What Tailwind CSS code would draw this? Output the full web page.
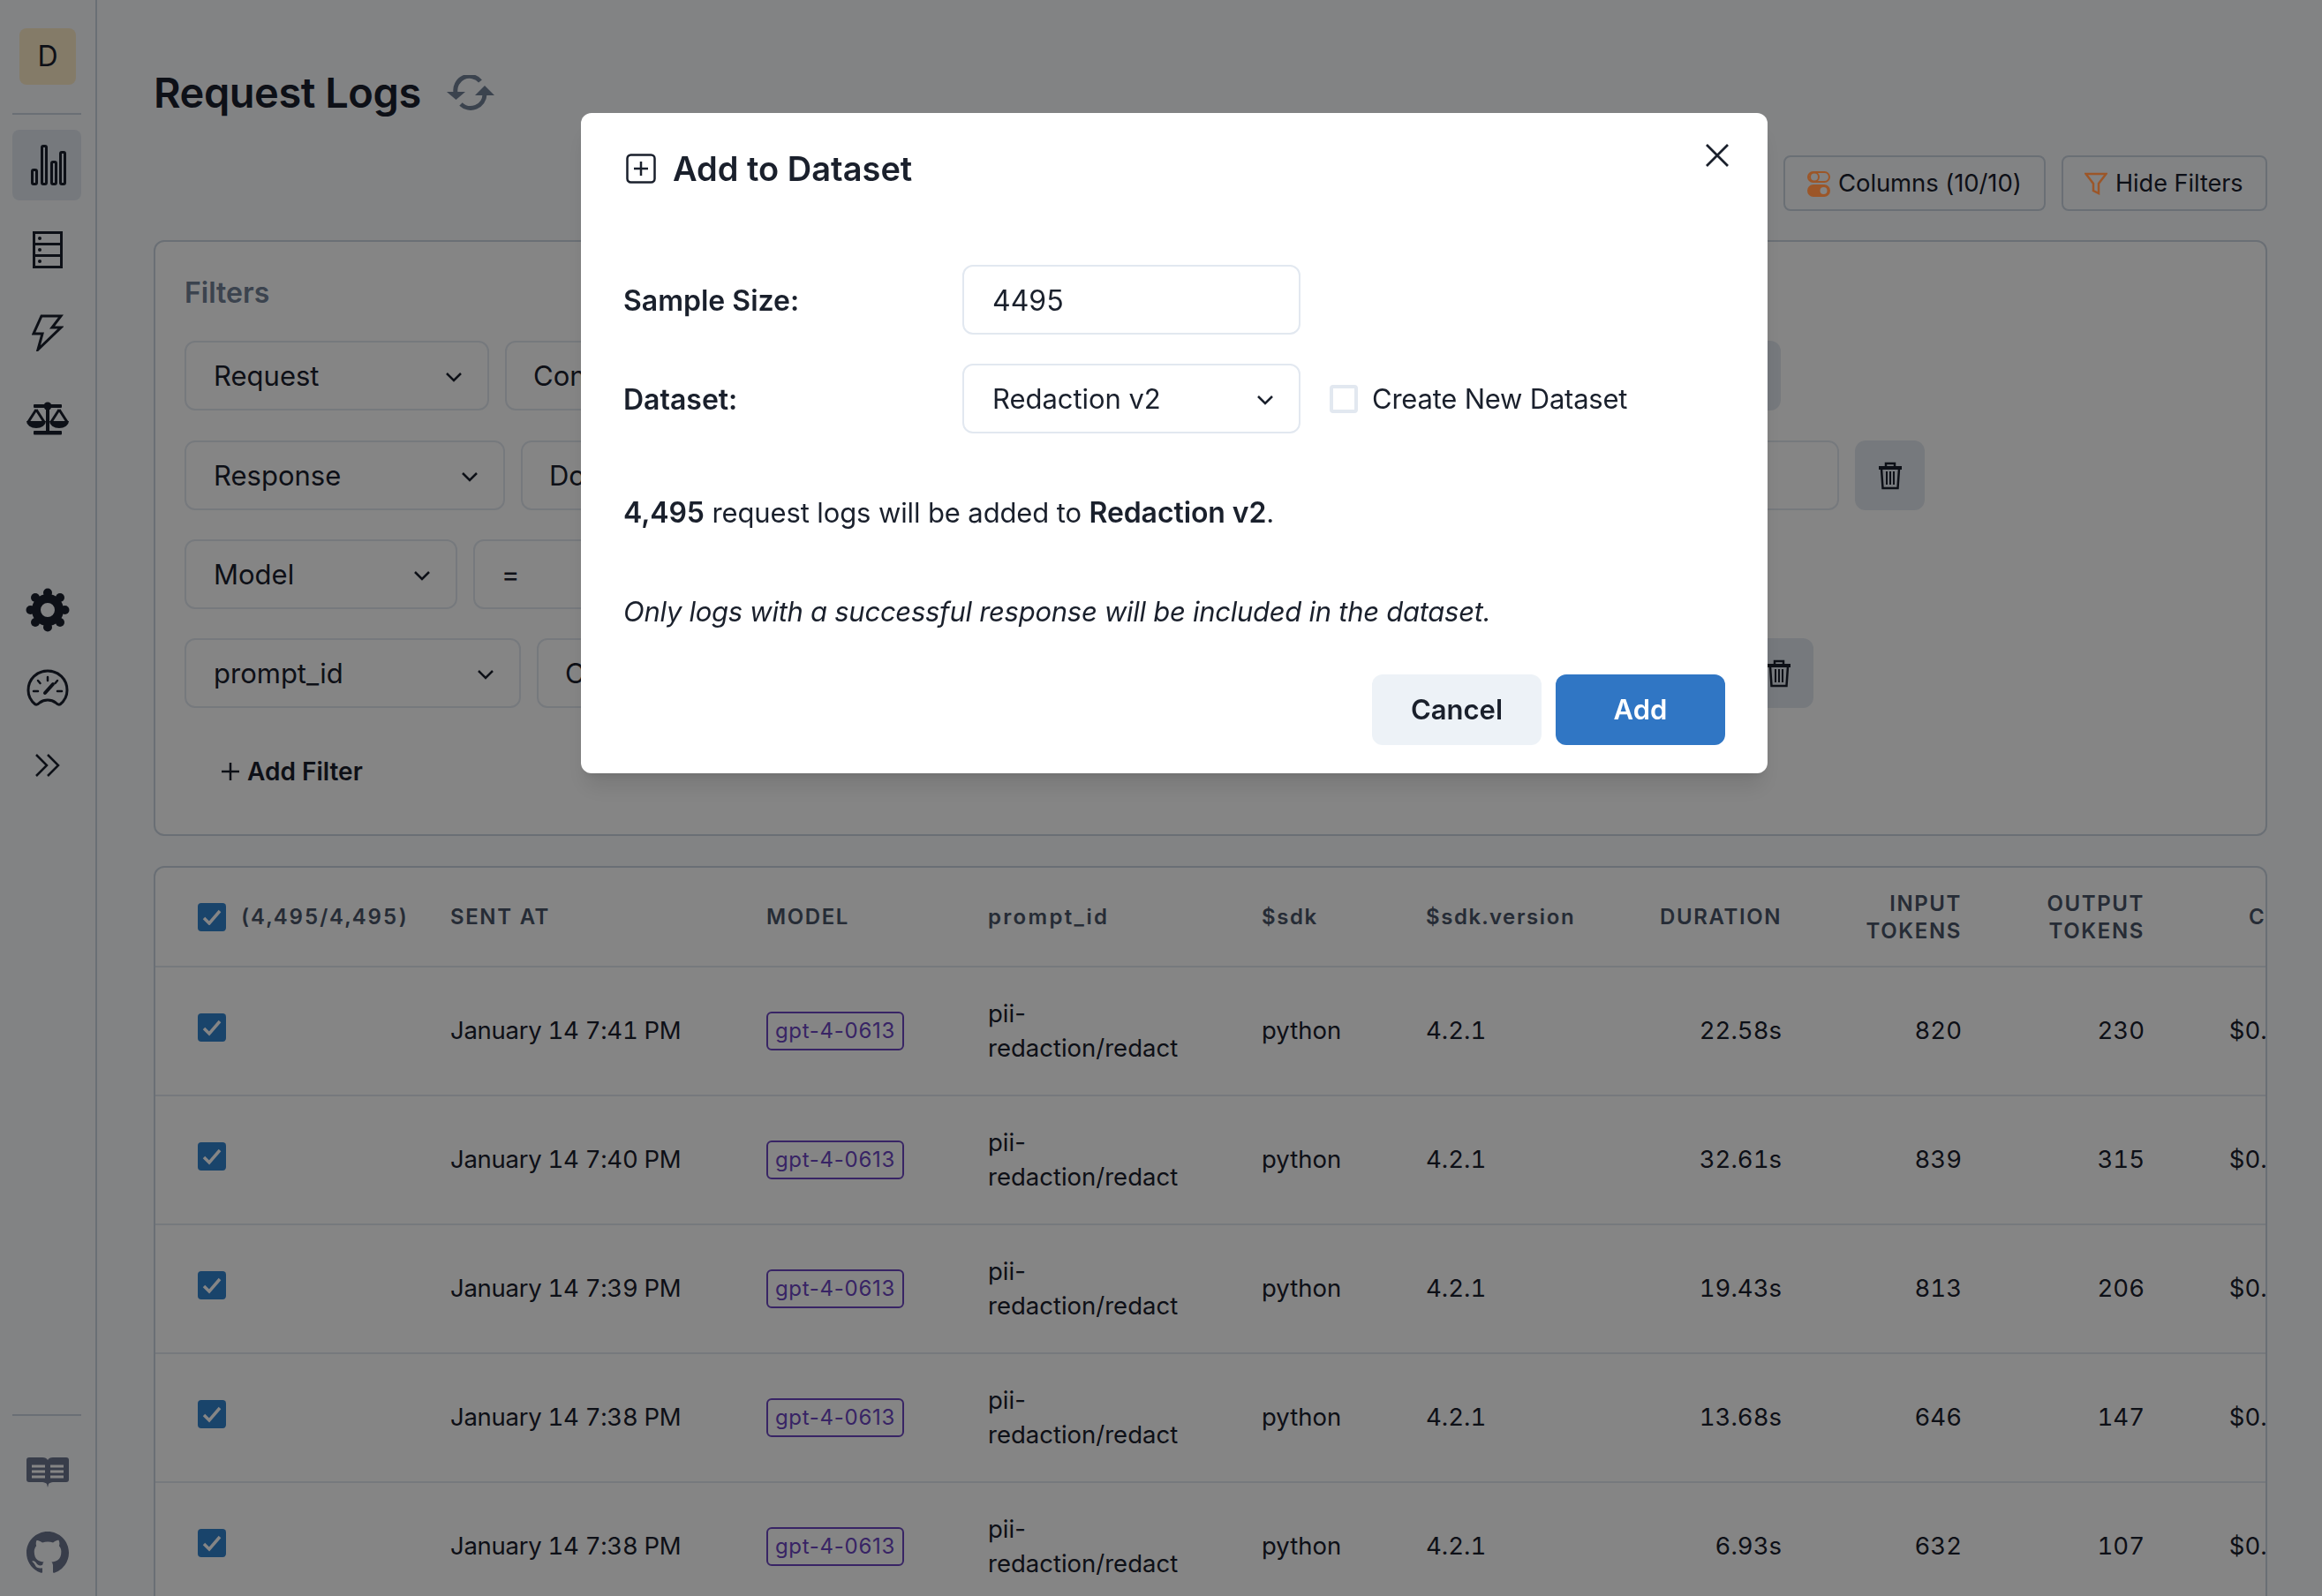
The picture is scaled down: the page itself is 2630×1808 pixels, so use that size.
<!DOCTYPE html>
<html><head><meta charset="utf-8"><title>Request Logs</title>
<script src="https://cdn.jsdelivr.net/npm/@tailwindcss/browser@4"></script></head>
<body class="font-[Inter,sans-serif] text-[#1a202c] overflow-hidden">
<div class="flex w-[2630px] h-[1808px] overflow-hidden bg-[#f9fbfe]">
  <aside class="w-[110px] shrink-0 border-r-2 border-[#cbd5e0] flex flex-col items-center pr-[2px]">
    <div class="mt-[32px] ml-[2px] w-[64px] h-[64px] rounded-lg bg-[#feebc8] flex items-center justify-center text-[32px]">D</div>
    <div class="mt-[32px] w-[78px] h-[2px] bg-[#cbd5e0]"></div>
    <div class="mt-[17px] w-[78px] h-[80px] pl-[2px] rounded-lg bg-[#e2e8f0] flex items-center justify-center">
      <svg width="48" height="48" viewBox="0 0 48 48" fill="none" stroke="#1a202c" stroke-width="3"><rect x="6.5" y="29.5" width="5" height="16" rx="1.5"/><rect x="17.5" y="2.5" width="5" height="43" rx="1.5"/><rect x="28.5" y="20.5" width="5" height="25" rx="1.5"/><rect x="38.5" y="9.5" width="5" height="36" rx="1.5"/></svg>
    </div>
    <div class="mt-[16px] w-[78px] h-[80px] pl-[2px] flex items-center justify-center">
      <svg width="36" height="44" viewBox="0 0 36 44" fill="none" stroke="#1a202c" stroke-width="3"><rect x="2.5" y="2.5" width="31" height="39"/><path d="M2.5 15.5h31M2.5 28.5h31"/><g fill="#1a202c" stroke="none"><circle cx="9" cy="9" r="2"/><circle cx="9" cy="22" r="2"/><circle cx="9" cy="35" r="2"/></g></svg>
    </div>
    <div class="mt-[14px] w-[78px] h-[80px] pl-[2px] flex items-center justify-center">
      <svg width="36" height="42" viewBox="0 0 36 42" fill="none" stroke="#1a202c" stroke-width="3" stroke-linejoin="miter"><path d="M11 2h22L23 15h10L7 40l5-18H2z"/></svg>
    </div>
    <div class="mt-[18px] w-[78px] h-[80px] pl-[2px] flex items-center justify-center">
      <svg width="50" height="40" viewBox="0 0 50 40" fill="#1a202c"><rect x="23" y="3" width="4" height="33"/><rect x="9" y="3" width="32" height="4" rx="1"/><circle cx="25" cy="5" r="4.500"/><rect x="9" y="33" width="32" height="4.500" rx="1"/><path d="M1 22a11 8 0 0 0 22 0z"/><path d="M27 22a11 8 0 0 0 22 0z"/><path d="M12 9L3 23M12 9l9 14M38 9l-9 14M38 9l9 14" fill="none" stroke="#1a202c" stroke-width="3"/></svg>
    </div>
    <div class="mt-[136px] w-[78px] h-[80px] pl-[2px] flex items-center justify-center">
      <svg width="50" height="50" viewBox="0 0 50 50" fill="none"><circle cx="25" cy="25" r="13" stroke="#1a202c" stroke-width="10"/><g fill="#1a202c"><circle cx="25" cy="5.500" r="5"/><circle cx="25" cy="44.500" r="5"/><circle cx="5.500" cy="25" r="5"/><circle cx="44.500" cy="25" r="5"/><circle cx="11" cy="11" r="5"/><circle cx="39" cy="11" r="5"/><circle cx="11" cy="39" r="5"/><circle cx="39" cy="39" r="5"/></g></svg>
    </div>
    <div class="mt-[8px] w-[78px] h-[80px] pl-[2px] flex items-center justify-center">
      <svg width="48" height="42" viewBox="0 0 48 42" fill="none" stroke="#1a202c" stroke-width="3" stroke-linecap="round"><path d="M10 40C5 36 2 30 2 24C2 11 12 2 24 2s22 9 22 22c0 6-3 12-8 16-2 1-4-1-5-2-5-4-13-4-18 0-1 1-3 3-5 2z"/><path d="M24 9v4M13 13l2.500 3M35 13l-2.500 3M8 25h5M35 25h5" stroke-width="2.500"/><path d="M21 27l9-10" stroke-width="4"/></svg>
    </div>
    <div class="mt-[8px] w-[78px] h-[80px] pl-[2px] flex items-center justify-center">
      <svg width="30" height="26" viewBox="0 0 30 26" fill="none" stroke="#1a202c" stroke-width="2.500"><path d="M2 1l12 12L2 25M15 1l12 12-12 12"/></svg>
    </div>
    <div class="mt-auto w-[78px] h-[2px] bg-[#cbd5e0]"></div>
    <div class="mt-[46px] ml-[2px] flex items-center justify-center">
      <svg width="48" height="36" viewBox="0 0 48 36" fill="#6c758e"><path d="M3 1h15c3 0 5 1 6 3 1-2 3-3 6-3h15c2 0 3 1 3 3v22c0 2-1 3-3 3H30c-2 0-4 1-5 2l-1 4-1-4c-1-1-3-2-5-2H3c-2 0-3-1-3-3V4c0-2 1-3 3-3z"/><path d="M6 11h15M6 17h15M6 23h15M27 11h15M27 17h15M27 23h15" stroke="#ffffff" stroke-width="3"/></svg>
    </div>
    <div class="mt-[49px] mb-[25px] ml-[2px] flex items-center justify-center">
      <svg width="48" height="48" viewBox="0 0 16 16" fill="#6c758e"><path d="M8 0C3.580 0 0 3.580 0 8c0 3.540 2.290 6.530 5.470 7.590.4.070.55-.17.55-.38 0-.19-.01-.82-.01-1.490-2.010.37-2.530-.49-2.690-.94-.09-.23-.48-.94-.82-1.130-.28-.15-.68-.52-.01-.53.63-.01 1.080.58 1.230.82.72 1.210 1.870.87 2.330.66.070-.52.28-.87.51-1.070-1.780-.2-3.640-.89-3.640-3.950 0-.87.31-1.590.82-2.150-.08-.2-.36-1.020.08-2.120 0 0 .67-.21 2.200.82.64-.18 1.320-.27 2-.27.68 0 1.360.09 2 .27 1.530-1.040 2.200-.82 2.200-.82.44 1.100.16 1.920.08 2.120.51.56.82 1.270.82 2.150 0 3.070-1.870 3.750-3.650 3.950.29.25.54.73.54 1.480 0 1.070-.01 1.930-.01 2.200 0 .21.15.46.55.38A8.013 8.013 0 0016 8c0-4.420-3.580-8-8-8z"/></svg>
    </div>
  </aside>

  <main class="flex-1 min-w-0 pl-[64px] pr-[62px]">
    <div class="flex items-center h-[60px] mt-[75px] gap-[29px]">
      <h1 class="text-[47px] font-semibold leading-none tracking-[-0.01em] -mt-[1px]">Request Logs</h1>
      <svg width="54" height="40" viewBox="0 0 54 40" fill="none" stroke="#718096" stroke-width="5"><path d="M10 20A16 16 0 0 1 38 7"/><path d="M43 22A16 16 0 0 1 16 33"/><path d="M0 19h21l-10.500 9z" fill="#718096" stroke="none"/><path d="M32 23h22L43 12z" fill="#718096" stroke="none"/></svg>
    </div>
    <div class="flex justify-end gap-[18px] mt-[41px]">
      <button class="h-[63px] w-[300px] rounded-lg border-2 border-[#cbd5e0] text-[27px]">Add to Dataset</button>
      <button class="h-[63px] w-[297px] rounded-lg border-2 border-[#cbd5e0] text-[27.500px] tracking-[-0.1px] flex items-center pt-[1px] pl-[25px] gap-[9px]">
        <svg class="relative z-50" width="26" height="30" viewBox="0 0 26 30" fill="none" stroke="#9c5628" stroke-width="2"><rect x="1" y="2" width="24" height="11" rx="5.500"/><circle cx="8" cy="7.500" r="5"/><rect x="1" y="17" width="24" height="12" rx="6" fill="#9c5628"/><circle cx="18.500" cy="23" r="4" fill="#858585" stroke="none"/></svg>
        Columns (10/10)
      </button>
      <button class="h-[63px] w-[233px] rounded-lg border-2 border-[#cbd5e0] text-[27px] flex items-center pt-[1px] pl-[24px] gap-[9px]">
        <svg class="relative z-50" width="26" height="26" viewBox="0 0 26 26" fill="none" stroke="#9c5628" stroke-width="2.500"><path d="M1.500 2h23L16 13v11l-6-3v-8z"/></svg>
        Hide Filters
      </button>
    </div>

    <section class="mt-[33px] h-[675px] rounded-xl border-2 border-[#cbd5e0] bg-white pl-[33px]">
      <h2 class="mt-[40px] h-[36px] leading-[36px] text-[32px] font-semibold text-[#718096]">Filters</h2>
      <div class="mt-[36px] flex gap-[18px] h-[79px]">
        <div class="w-[345px] rounded-xl border-2 border-[#e2e8f0] flex items-center justify-between pt-[2px] pl-[31px] pr-[28px] text-[31px]">Request<svg width="20" height="12" viewBox="0 0 20 12" fill="none" stroke="#1a202c" stroke-width="2.500"><path d="M2 2l8 8 8-8"/></svg></div>
        <div class="w-[250px] rounded-xl border-2 border-[#e2e8f0] flex items-center pt-[2px] pl-[30px] text-[31px]">Contains</div>
        <div class="w-[1081px] rounded-xl border-2 border-[#e2e8f0]"></div>
        <div class="w-[78px] rounded-xl bg-[#e2e8f0]"></div>
      </div>
      <div class="mt-[34px] flex gap-[18px] h-[79px]">
        <div class="w-[363px] rounded-xl border-2 border-[#e2e8f0] flex items-center justify-between pt-[2px] pl-[31px] pr-[28px] text-[31px]">Response<svg width="20" height="12" viewBox="0 0 20 12" fill="none" stroke="#1a202c" stroke-width="2.500"><path d="M2 2l8 8 8-8"/></svg></div>
        <div class="w-[340px] rounded-xl border-2 border-[#e2e8f0] flex items-center pt-[2px] pl-[30px] text-[31px]">Does not contain</div>
        <div class="w-[1135px] rounded-xl border-2 border-[#e2e8f0]"></div>
        <div class="w-[79px] rounded-xl bg-[#e2e8f0] flex items-center justify-center">
          <svg width="28" height="32" viewBox="0 0 28 32" fill="none" stroke="#1a202c" stroke-width="2.500"><path d="M1 7h26" stroke-width="4"/><path d="M9 6V2h10v4"/><path d="M4 8l1.500 22h17L24 8"/><path d="M10 11v15M14 11v15M18 11v15" stroke-width="2"/></svg>
        </div>
      </div>
      <div class="mt-[33px] flex gap-[18px] h-[79px]">
        <div class="w-[309px] rounded-xl border-2 border-[#e2e8f0] flex items-center justify-between pt-[2px] pl-[31px] pr-[28px] text-[31px]">Model<svg width="20" height="12" viewBox="0 0 20 12" fill="none" stroke="#1a202c" stroke-width="2.500"><path d="M2 2l8 8 8-8"/></svg></div>
        <div class="w-[214px] rounded-xl border-2 border-[#e2e8f0] flex items-center pt-[2px] pl-[30px] text-[31px]">=</div>
        <div class="w-[332px] rounded-xl border-2 border-[#e2e8f0]"></div>
      </div>
      <div class="mt-[33px] flex gap-[18px] h-[79px]">
        <div class="w-[381px] rounded-xl border-2 border-[#e2e8f0] flex items-center justify-between pt-[2px] pl-[31px] pr-[28px] text-[31px]">prompt_id<svg width="20" height="12" viewBox="0 0 20 12" fill="none" stroke="#1a202c" stroke-width="2.500"><path d="M2 2l8 8 8-8"/></svg></div>
        <div class="w-[250px] rounded-xl border-2 border-[#e2e8f0] flex items-center pt-[2px] pl-[30px] text-[31px]">Contains</div>
        <div class="w-[1082px] rounded-xl border-2 border-[#e2e8f0]"></div>
        <div class="w-[78px] rounded-xl bg-[#e2e8f0] flex items-center justify-center">
          <svg width="28" height="32" viewBox="0 0 28 32" fill="none" stroke="#1a202c" stroke-width="2.500"><path d="M1 7h26" stroke-width="4"/><path d="M9 6V2h10v4"/><path d="M4 8l1.500 22h17L24 8"/><path d="M10 11v15M14 11v15M18 11v15" stroke-width="2"/></svg>
        </div>
      </div>
      <button class="mt-[50px] ml-[41px] flex items-center gap-[8px] text-[28px] font-semibold h-[44px]">
        <svg width="22" height="22" viewBox="0 0 22 22" stroke="#1a202c" stroke-width="2.500"><path d="M11 1v20M1 11h20"/></svg>
        Add Filter
      </button>
    </section>

    <section class="mt-[34px] h-[900px] rounded-xl border-2 border-[#cbd5e0] bg-white overflow-hidden">
      <table class="table-fixed w-[2463px] border-collapse text-[27.500px] tabular-nums">
        <colgroup><col class="w-[334px]"><col class="w-[358px]"><col class="w-[251px]"><col class="w-[310px]"><col class="w-[186px]"><col class="w-[245px]"><col class="w-[158px]"><col class="w-[204px]"><col class="w-[207px]"><col class="w-[210px]"></colgroup>
        <thead class="text-[24px] font-semibold text-[#4a5568] tracking-[1.600px] leading-[31px]">
          <tr class="h-[112px] border-b-2 border-[#e2e8f0] text-left">
            <th class="pl-[48px] font-semibold"><span class="flex items-center gap-[17px] tracking-[1.900px]"><span class="w-[32px] h-[32px] rounded bg-[#3182ce] flex items-center justify-center shrink-0"><svg width="22" height="18" viewBox="0 0 22 18" fill="none" stroke="#fff" stroke-width="3.500"><path d="M2 10l6 6L20 2"/></svg></span>(4,495/4,495)</span></th>
            <th class="font-semibold">SENT AT</th><th class="font-semibold">MODEL</th><th class="font-semibold tracking-[2.300px]">prompt_id</th><th class="font-semibold">$sdk</th><th class="font-semibold">$sdk.version</th>
            <th class="font-semibold text-right">DURATION</th><th class="font-semibold text-right">INPUT<br>TOKENS</th><th class="font-semibold text-right">OUTPUT<br>TOKENS</th><th class="font-semibold text-right pr-[18px]">COST</th>
          </tr>
        </thead>
        <tbody class="leading-[39.500px]">
          <tr class="h-[146px] border-b-2 border-[#e2e8f0]">
            <td class="pl-[48px]"><span class="block -mt-[8px] w-[32px] h-[32px] rounded bg-[#3182ce]"><svg width="32" height="32" viewBox="0 0 32 32" fill="none" stroke="#fff" stroke-width="3.500"><path d="M7 17l6 6L25 9"/></svg></span></td>
            <td class="tracking-[-0.28px]">January 14 7:41 PM</td>
            <td><span class="inline-flex items-center h-[44px] w-[156px] justify-center whitespace-nowrap leading-none rounded-md border-2 border-[#6b46c1] text-[#6b46c1] text-[24px] normal-nums tracking-[0.03em]">gpt-4-0613</span></td>
            <td class="normal-nums">pii-<br>redaction/redact</td><td>python</td><td>4.2.1</td><td class="text-right">22.58s</td><td class="text-right">820</td><td class="text-right">230</td><td class="text-right">$0.0384</td>
          </tr>
          <tr class="h-[146px] border-b-2 border-[#e2e8f0]">
            <td class="pl-[48px]"><span class="block -mt-[8px] w-[32px] h-[32px] rounded bg-[#3182ce]"><svg width="32" height="32" viewBox="0 0 32 32" fill="none" stroke="#fff" stroke-width="3.500"><path d="M7 17l6 6L25 9"/></svg></span></td>
            <td class="tracking-[-0.28px]">January 14 7:40 PM</td>
            <td><span class="inline-flex items-center h-[44px] w-[156px] justify-center whitespace-nowrap leading-none rounded-md border-2 border-[#6b46c1] text-[#6b46c1] text-[24px] normal-nums tracking-[0.03em]">gpt-4-0613</span></td>
            <td class="normal-nums">pii-<br>redaction/redact</td><td>python</td><td>4.2.1</td><td class="text-right">32.61s</td><td class="text-right">839</td><td class="text-right">315</td><td class="text-right">$0.0441</td>
          </tr>
          <tr class="h-[146px] border-b-2 border-[#e2e8f0]">
            <td class="pl-[48px]"><span class="block -mt-[8px] w-[32px] h-[32px] rounded bg-[#3182ce]"><svg width="32" height="32" viewBox="0 0 32 32" fill="none" stroke="#fff" stroke-width="3.500"><path d="M7 17l6 6L25 9"/></svg></span></td>
            <td class="tracking-[-0.28px]">January 14 7:39 PM</td>
            <td><span class="inline-flex items-center h-[44px] w-[156px] justify-center whitespace-nowrap leading-none rounded-md border-2 border-[#6b46c1] text-[#6b46c1] text-[24px] normal-nums tracking-[0.03em]">gpt-4-0613</span></td>
            <td class="normal-nums">pii-<br>redaction/redact</td><td>python</td><td>4.2.1</td><td class="text-right">19.43s</td><td class="text-right">813</td><td class="text-right">206</td><td class="text-right">$0.0368</td>
          </tr>
          <tr class="h-[146px] border-b-2 border-[#e2e8f0]">
            <td class="pl-[48px]"><span class="block -mt-[8px] w-[32px] h-[32px] rounded bg-[#3182ce]"><svg width="32" height="32" viewBox="0 0 32 32" fill="none" stroke="#fff" stroke-width="3.500"><path d="M7 17l6 6L25 9"/></svg></span></td>
            <td class="tracking-[-0.28px]">January 14 7:38 PM</td>
            <td><span class="inline-flex items-center h-[44px] w-[156px] justify-center whitespace-nowrap leading-none rounded-md border-2 border-[#6b46c1] text-[#6b46c1] text-[24px] normal-nums tracking-[0.03em]">gpt-4-0613</span></td>
            <td class="normal-nums">pii-<br>redaction/redact</td><td>python</td><td>4.2.1</td><td class="text-right">13.68s</td><td class="text-right">646</td><td class="text-right">147</td><td class="text-right">$0.0282</td>
          </tr>
          <tr class="h-[146px] border-b-2 border-[#e2e8f0]">
            <td class="pl-[48px]"><span class="block -mt-[8px] w-[32px] h-[32px] rounded bg-[#3182ce]"><svg width="32" height="32" viewBox="0 0 32 32" fill="none" stroke="#fff" stroke-width="3.500"><path d="M7 17l6 6L25 9"/></svg></span></td>
            <td class="tracking-[-0.28px]">January 14 7:38 PM</td>
            <td><span class="inline-flex items-center h-[44px] w-[156px] justify-center whitespace-nowrap leading-none rounded-md border-2 border-[#6b46c1] text-[#6b46c1] text-[24px] normal-nums tracking-[0.03em]">gpt-4-0613</span></td>
            <td class="normal-nums">pii-<br>redaction/redact</td><td>python</td><td>4.2.1</td><td class="text-right">6.93s</td><td class="text-right">632</td><td class="text-right">107</td><td class="text-right">$0.0254</td>
          </tr>
        </tbody>
      </table>
    </section>
  </main>
</div>

<div class="fixed inset-0 z-40 bg-black/48 flex justify-center items-start pt-[128px] pl-[30px]">
  <div class="relative w-[1344px] h-[748px] bg-white rounded-xl shadow-xl px-[48px] pt-[40px] text-[#1a202c]">
    <div class="flex items-center h-[46px] gap-[19px] pl-[3px]">
      <svg width="34" height="34" viewBox="0 0 34 34" fill="none" stroke="#1a202c" stroke-width="2.500"><rect x="1.500" y="1.500" width="31" height="31" rx="4"/><path d="M17 9v16M9 17h16"/></svg>
      <h2 class="text-[38px] font-semibold leading-none">Add to Dataset</h2>
    </div>
    <svg class="absolute right-[44px] top-[35px]" width="26" height="26" viewBox="0 0 26 26" fill="none" stroke="#1a202c" stroke-width="2.800"><path d="M1 1l24 24M25 1L1 25"/></svg>
    <div class="mt-[86px] flex items-center h-[79px]">
      <label class="w-[384px] pt-[2px] text-[32px] font-semibold">Sample Size:</label>
      <div class="w-[383px] h-[79px] rounded-xl border-2 border-[#e2e8f0] flex items-center pt-[2px] pl-[32px] text-[32px]">4495</div>
    </div>
    <div class="mt-[33px] flex items-center h-[79px]">
      <label class="w-[384px] pt-[2px] text-[32px] font-semibold">Dataset:</label>
      <div class="w-[383px] h-[79px] rounded-xl border-2 border-[#e2e8f0] flex items-center justify-between pt-[2px] pl-[32px] pr-[28px] text-[31px] tracking-[-0.05px]">Redaction v2<svg width="20" height="12" viewBox="0 0 20 12" fill="none" stroke="#1a202c" stroke-width="2.500"><path d="M2 2l8 8 8-8"/></svg></div>
      <span class="ml-[33px] w-[32px] h-[32px] rounded border-4 border-[#e2e8f0]"></span>
      <span class="ml-[16px] pt-[2px] text-[31px] tracking-[-0.22px]">Create New Dataset</span>
    </div>
    <p class="mt-[67px] h-[46px] leading-[46px] text-[31px] tracking-[-0.12px]"><b class="font-semibold text-[32px] tracking-[-0.1px]">4,495</b> request logs will be added to <b class="font-semibold text-[32px] tracking-[-0.1px]">Redaction v2</b>.</p>
    <p class="mt-[66px] h-[46px] leading-[46px] text-[31px] italic tracking-[-0.27px]">Only logs with a successful response will be included in the dataset.</p>
    <div class="mt-[48px] flex justify-end gap-[16px]">
      <button class="w-[192px] h-[80px] rounded-xl bg-[#edf2f7] text-[31px] font-semibold">Cancel</button>
      <button class="w-[192px] h-[80px] rounded-xl bg-[#3076c4] text-white text-[31px] font-semibold">Add</button>
    </div>
  </div>
</div>
</body></html>
